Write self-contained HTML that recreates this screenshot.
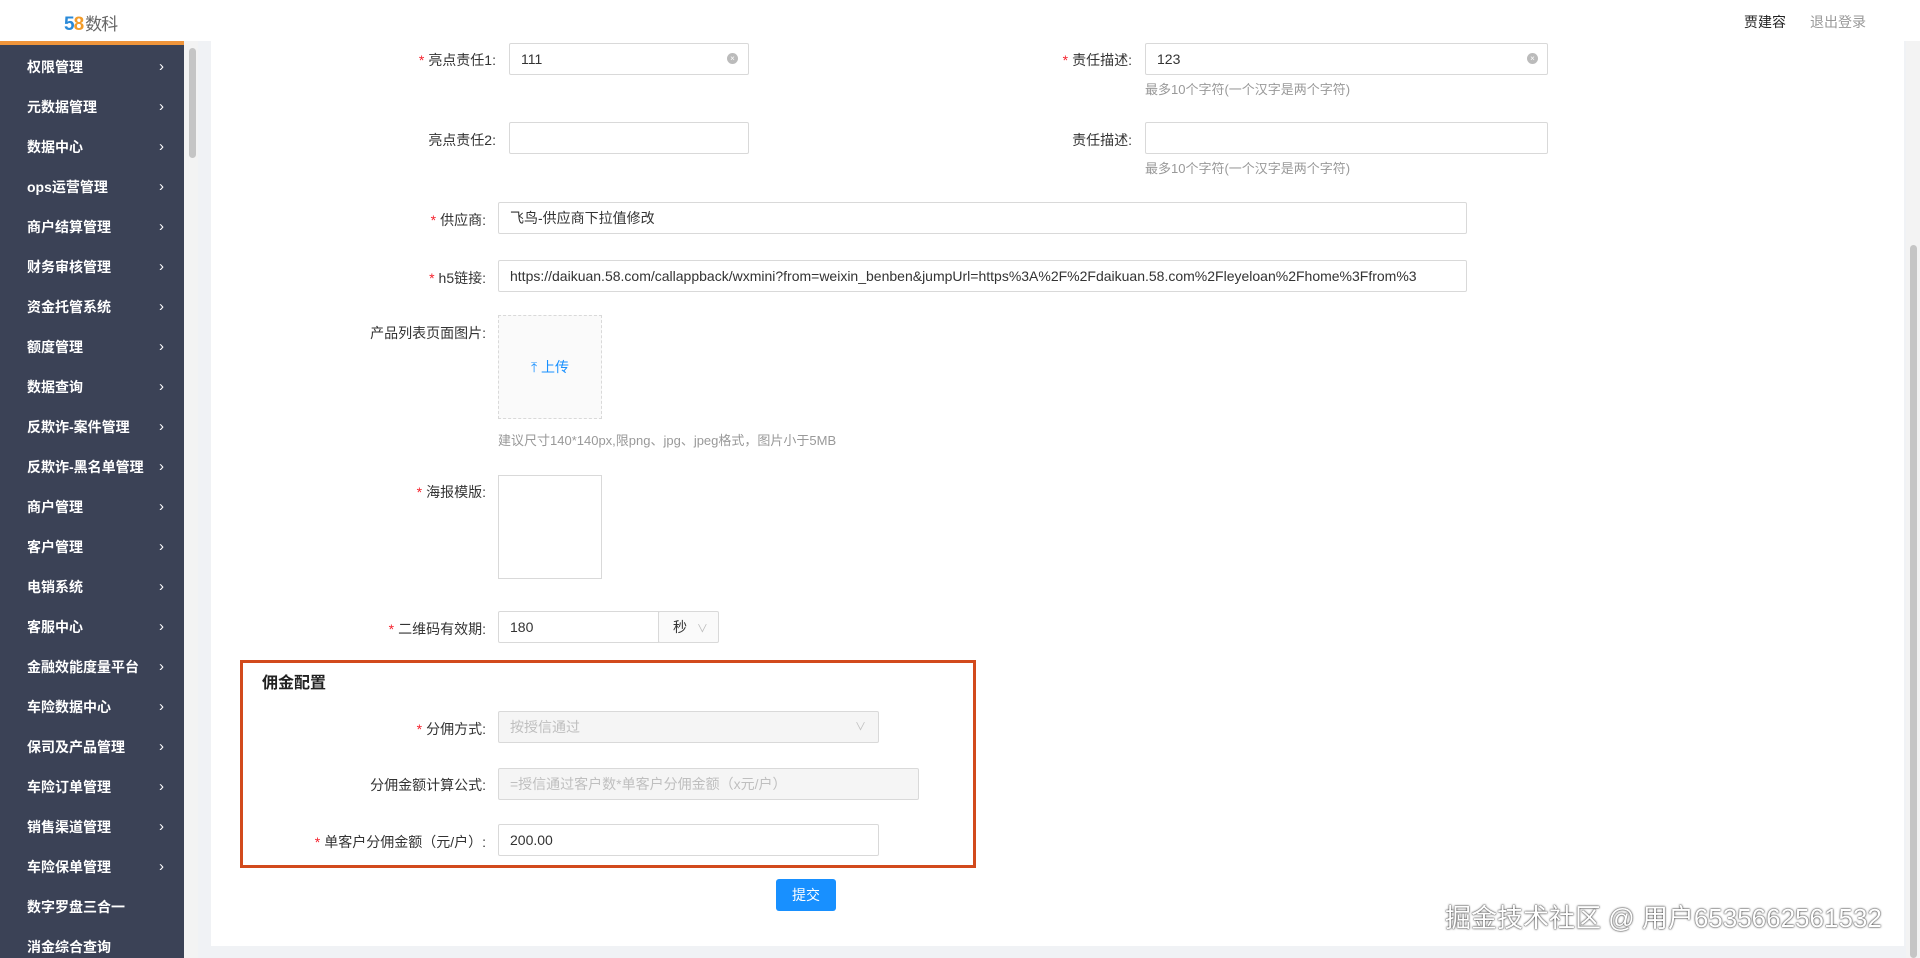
<!DOCTYPE html>
<html><head><meta charset="utf-8"><style>
*{box-sizing:border-box;margin:0;padding:0}
body{width:1920px;height:958px;overflow:hidden;background:#f0f2f5;font-family:"Liberation Sans","Noto Sans CJK SC",sans-serif;font-size:14px;color:#333;position:relative}
.hdr{position:absolute;left:0;top:0;width:1920px;height:41px;background:#fff}
.logo{position:absolute;left:64px;top:10px;font-size:19px;font-weight:bold;letter-spacing:-1px}
.logo b{color:#2a8ad8}.logo i{font-style:normal;color:#f39c2a}.logo span{color:#666;font-weight:normal;font-size:17px;margin-left:2px}
.user{position:absolute;left:1744px;top:12px;color:#222}
.out{position:absolute;left:1810px;top:12px;color:#999}
.side{position:absolute;left:0;top:41px;width:184px;height:917px;background:#3b4256;border-top:4px solid #f0953b}
.mi{position:absolute;left:27px;color:#fff;font-weight:bold;font-size:14px;line-height:20px}
.ar{position:absolute;left:159px;color:#fff;font-size:15px;line-height:20px}
.strk{position:absolute;left:184px;top:41px;width:14px;height:917px;background:#f3f3f3}
.sthm{position:absolute;left:189px;top:48px;width:7px;height:110px;background:#c5c5c5;border-radius:4px}
.panel{position:absolute;left:211px;top:41px;width:1693px;height:905px;background:#fff}
.rtrk{position:absolute;left:1906px;top:41px;width:14px;height:917px;background:#f3f3f3}
.rthm{position:absolute;left:1910px;top:245px;width:7px;height:713px;background:#c5c5c5;border-radius:4px}
.lbl{position:absolute;text-align:right;white-space:nowrap;color:#333;margin-right:7px}
.lbl em{color:#f5222d;font-style:normal;margin-right:4px}
.in{position:absolute;border:1px solid #d9d9d9;border-radius:2px;background:#fff;padding-left:11px;line-height:30px;white-space:nowrap;overflow:hidden}
.dis{background:#f5f5f5;color:#bfbfbf}
.hint{position:absolute;color:#999;font-size:13px}
.clr{position:absolute;width:11px;height:11px;border-radius:50%;background:#bbb;color:#fff;font-size:8px;line-height:11px;text-align:center}
</style></head><body>
<div class="hdr"><div class="logo"><b>5</b><i>8</i><span>数科</span></div><div class="user">贾建容</div><div class="out">退出登录</div></div>
<div class="side">
<div class="mi" style="top:12px">权限管理</div><div class="ar" style="top:12px">›</div>
<div class="mi" style="top:52px">元数据管理</div><div class="ar" style="top:52px">›</div>
<div class="mi" style="top:92px">数据中心</div><div class="ar" style="top:92px">›</div>
<div class="mi" style="top:132px">ops运营管理</div><div class="ar" style="top:132px">›</div>
<div class="mi" style="top:172px">商户结算管理</div><div class="ar" style="top:172px">›</div>
<div class="mi" style="top:212px">财务审核管理</div><div class="ar" style="top:212px">›</div>
<div class="mi" style="top:252px">资金托管系统</div><div class="ar" style="top:252px">›</div>
<div class="mi" style="top:292px">额度管理</div><div class="ar" style="top:292px">›</div>
<div class="mi" style="top:332px">数据查询</div><div class="ar" style="top:332px">›</div>
<div class="mi" style="top:372px">反欺诈-案件管理</div><div class="ar" style="top:372px">›</div>
<div class="mi" style="top:412px">反欺诈-黑名单管理</div><div class="ar" style="top:412px">›</div>
<div class="mi" style="top:452px">商户管理</div><div class="ar" style="top:452px">›</div>
<div class="mi" style="top:492px">客户管理</div><div class="ar" style="top:492px">›</div>
<div class="mi" style="top:532px">电销系统</div><div class="ar" style="top:532px">›</div>
<div class="mi" style="top:572px">客服中心</div><div class="ar" style="top:572px">›</div>
<div class="mi" style="top:612px">金融效能度量平台</div><div class="ar" style="top:612px">›</div>
<div class="mi" style="top:652px">车险数据中心</div><div class="ar" style="top:652px">›</div>
<div class="mi" style="top:692px">保司及产品管理</div><div class="ar" style="top:692px">›</div>
<div class="mi" style="top:732px">车险订单管理</div><div class="ar" style="top:732px">›</div>
<div class="mi" style="top:772px">销售渠道管理</div><div class="ar" style="top:772px">›</div>
<div class="mi" style="top:812px">车险保单管理</div><div class="ar" style="top:812px">›</div>
<div class="mi" style="top:852px">数字罗盘三合一</div>
<div class="mi" style="top:892px">消金综合查询</div>
</div>
<div class="strk"></div><div class="sthm"></div>
<div class="panel"></div>
<div class="rtrk"></div><div class="rthm"></div>

<div class="lbl" style="right:1417px;top:50px"><em>*</em>亮点责任1:</div>
<div class="in" style="left:509px;top:43px;width:240px;height:32px">111</div><div class="clr" style="left:727px;top:53px">×</div>
<div class="lbl" style="right:781px;top:50px"><em>*</em>责任描述:</div>
<div class="in" style="left:1145px;top:43px;width:403px;height:32px">123</div><div class="clr" style="left:1527px;top:53px">×</div>
<div class="hint" style="left:1145px;top:79px">最多10个字符(一个汉字是两个字符)</div>

<div class="lbl" style="right:1417px;top:130px">亮点责任2:</div>
<div class="in" style="left:509px;top:122px;width:240px;height:32px"></div>
<div class="lbl" style="right:781px;top:130px">责任描述:</div>
<div class="in" style="left:1145px;top:122px;width:403px;height:32px"></div>
<div class="hint" style="left:1145px;top:158px">最多10个字符(一个汉字是两个字符)</div>

<div class="lbl" style="right:1427px;top:210px"><em>*</em>供应商:</div>
<div class="in" style="left:498px;top:202px;width:969px;height:32px">飞鸟-供应商下拉值修改</div>
<div class="lbl" style="right:1427px;top:268px"><em>*</em>h5链接:</div>
<div class="in" style="left:498px;top:260px;width:969px;height:32px">https://daikuan.58.com/callappback/wxmini?from=weixin_benben&amp;jumpUrl=https%3A%2F%2Fdaikuan.58.com%2Fleyeloan%2Fhome%3Ffrom%3</div>

<div class="lbl" style="right:1427px;top:323px">产品列表页面图片:</div>
<div style="position:absolute;left:498px;top:315px;width:104px;height:104px;border:1px dashed #d9d9d9;background:#fafafa;text-align:center;line-height:102px;color:#1890ff">⤒ 上传</div>
<div class="hint" style="left:498px;top:430px">建议尺寸140*140px,限png、jpg、jpeg格式，图片小于5MB</div>

<div class="lbl" style="right:1427px;top:482px"><em>*</em>海报模版:</div>
<div style="position:absolute;left:498px;top:475px;width:104px;height:104px;border:1px solid #d9d9d9"></div>

<div class="lbl" style="right:1427px;top:619px"><em>*</em>二维码有效期:</div>
<div class="in" style="left:498px;top:611px;width:161px;height:32px;border-radius:2px 0 0 2px">180</div>
<div class="in" style="left:658px;top:611px;width:61px;height:32px;background:#fafafa;padding-left:14px">秒 <span style="color:#bbb;font-size:11px;margin-left:6px">∨</span></div>

<div style="position:absolute;left:240px;top:660px;width:736px;height:208px;border:3px solid #d24a1c"></div>
<div style="position:absolute;left:262px;top:669px;font-size:16px;font-weight:bold;color:#222">佣金配置</div>
<div class="lbl" style="right:1427px;top:719px"><em>*</em>分佣方式:</div>
<div class="in dis" style="left:498px;top:711px;width:381px;height:32px">按授信通过<span style="position:absolute;right:12px;font-size:11px">∨</span></div>
<div class="lbl" style="right:1427px;top:775px">分佣金额计算公式:</div>
<div class="in dis" style="left:498px;top:768px;width:421px;height:32px">=授信通过客户数*单客户分佣金额（x元/户）</div>
<div class="lbl" style="right:1427px;top:832px"><em>*</em>单客户分佣金额（元/户）:</div>
<div class="in" style="left:498px;top:824px;width:381px;height:32px">200.00</div>

<div style="position:absolute;left:776px;top:879px;width:60px;height:32px;background:#1890ff;border-radius:3px;color:#fff;text-align:center;line-height:32px">提交</div>

<div style="position:absolute;left:1445px;top:898px;font-size:26px;color:#fff;text-shadow:0 0 2px #333,0 0 1px #333;white-space:nowrap">掘金技术社区 @ 用户6535662561532</div>
</body></html>
